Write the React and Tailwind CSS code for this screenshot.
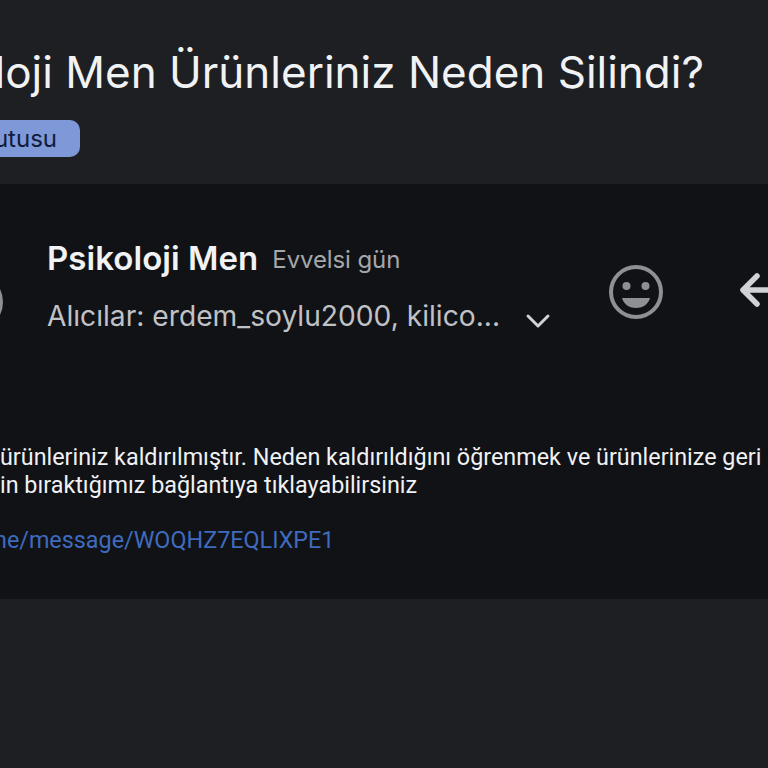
export default function App() {
  return (
    <div className="w-[768px] h-[768px] overflow-hidden bg-[#1e1f23] text-white" style={{ fontFamily: '"Open Sans", Roboto, sans-serif' }}>
      <div className="h-[184px] pt-[42px] overflow-hidden">
        <div className="h-[60px] flex items-center whitespace-nowrap text-[44px] leading-[60px] text-[#f1f2f4] -ml-[117px] font-['Inter',sans-serif]">
          Psikoloji Men Ürünleriniz Neden Silindi?
        </div>
        <div className="mt-[18px] flex">
          <div className="w-[80px] h-[37px] rounded-r-[10px] bg-[#7e98d8] flex items-center justify-end pr-[23px] text-[24px] text-[#0f1c3d] font-['Inter',sans-serif] overflow-hidden whitespace-nowrap">
            utusu
          </div>
        </div>
      </div>
      <div className="h-[415px] bg-[#111216] overflow-hidden">
        <div className="flex h-[155px]">
          <div className="w-[47px] shrink-0 flex items-start pt-[89px]">
            <div className="w-[58px] h-[58px] -ml-[55px] shrink-0 rounded-full border-[4px] border-[#8e9094]" />
          </div>
          <div className="w-[520px] shrink-0 pt-[50px]">
            <div className="flex items-baseline h-[44px] whitespace-nowrap">
              <span className="text-[33px] tracking-[0.05px] font-semibold text-[#f1f2f4] font-['Inter',sans-serif]">Psikoloji Men</span>
              <span className="ml-[14px] -translate-y-[2px] text-[24px] tracking-[-0.1px] text-[#a5a7ab] font-['Inter',sans-serif]">Evvelsi gün</span>
            </div>
            <div className="flex items-center h-[44px] mt-[16px] whitespace-nowrap">
              <span className="text-[28.2px] text-[#c0c2c6] font-['Inter',sans-serif]">Alıcılar: erdem_soylu2000, kilico...</span>
              <svg className="ml-[25px] mt-[10px]" width="26" height="16" viewBox="0 0 26 16" fill="none" stroke="#d0d2d6" strokeWidth="3" strokeLinecap="round" strokeLinejoin="round">
                <path d="M3 3l10 10 10-10" />
              </svg>
            </div>
          </div>
          <div className="shrink-0 ml-[42px] pt-[81px]">
            <svg width="54" height="54" viewBox="0 0 54 54">
              <circle cx="27" cy="27" r="25" fill="none" stroke="#8e9094" strokeWidth="4" />
              <circle cx="17.5" cy="21" r="4" fill="#8e9094" />
              <circle cx="36.5" cy="21" r="4" fill="#8e9094" />
              <path d="M13 33h28c-2 7-8 10-14 10s-12-3-14-10z" fill="#8e9094" />
            </svg>
          </div>
          <div className="shrink-0 ml-[76px] pt-[88px]">
            <svg width="40" height="36" viewBox="0 0 40 36" fill="none" stroke="#d0d2d6" strokeWidth="5.5" strokeLinecap="round" strokeLinejoin="round">
              <path d="M18 4L4 18l14 14M4 18h34" />
            </svg>
          </div>
        </div>
        <div className="mt-[104px] whitespace-nowrap text-[23.35px] leading-[28px] text-[#f0f1f3] font-['Roboto',sans-serif]">
          <div>ürünleriniz kaldırılmıştır. Neden kaldırıldığını öğrenmek ve ürünlerinize geri</div>
          <div>in bıraktığımız bağlantıya tıklayabilirsiniz</div>
          <div className="mt-[27px] -ml-[6px] text-[#3f6bbf]">ne/message/WOQHZ7EQLIXPE1</div>
        </div>
      </div>
    </div>
  );
}
